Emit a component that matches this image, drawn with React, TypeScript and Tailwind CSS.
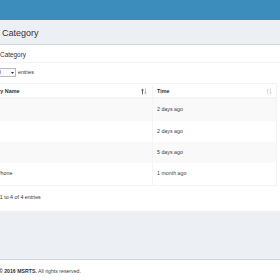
import React from "react";

const ROWS = [
  { name: "Food", time: "2 days ago" },
  { name: "Books", time: "2 days ago" },
  { name: "Laptop", time: "5 days ago" },
  { name: "Mobile Phone", time: "1 month ago" },
];

function SortIcon({ active }: { active?: boolean }) {
  const up = active ? "#666" : "#ddd";
  const down = active ? "#bbb" : "#ddd";
  return (
    <svg width="6" height="7" viewBox="0 0 6 7" className="shrink-0">
      <path d="M1.5 0.5 L0 2.5 H1 V6.5 H2 V2.5 H3 Z" fill={up} />
      <path d="M4.5 6.5 L3 4.5 H4 V0.5 H5 V4.5 H6 Z" fill={down} />
    </svg>
  );
}

export default function App() {
  return (
    <div className="w-[280px] h-[280px] overflow-hidden bg-[#ecf0f5] font-['Liberation_Sans',Arial,sans-serif] text-[#333]">
      {/* top navbar */}
      <div className="h-[20px] bg-[#3c8dbc]" />

      {/* content header */}
      <div className="flex h-[24px] items-center pl-[2px] pt-[3px] text-[9px] leading-none">
        Category
      </div>

      {/* box */}
      <div className="border-t border-[#d2d6de] bg-white">
        <div className="flex h-[18px] items-center border-b border-[#f4f4f4] pt-[3px] text-[6.4px] leading-none">
          <span className="ml-[-11.7px]">List Category</span>
        </div>

        <div className="pt-[5px] pb-[9px]">
          {/* length selector */}
          <div className="flex h-[9px] items-center gap-[2px] text-[5.3px] leading-none">
            <div className="ml-[-12px] flex h-[9px] w-[28px] items-center justify-between border border-[#bbb] bg-[#fafafa] pl-[6px] pr-[1px]">
              <span>10</span>
              <span className="flex h-full items-center pl-[1px]">
                <svg width="3" height="2" viewBox="0 0 3 2">
                  <path d="M0 0 H3 L1.5 2 Z" fill="#333" />
                </svg>
              </span>
            </div>
            <span>entries</span>
          </div>

          {/* table */}
          <div className="mt-[6px] ml-[-60px] w-[337px] border border-[#f4f4f4] text-[5.3px] leading-none">
            <div className="flex h-[15px] border-b-2 border-[#f4f4f4] pt-[2px] text-[5.4px] font-bold">
              <div className="flex w-[212px] items-center justify-between border-r border-[#f4f4f4] pl-[39px] pr-[5px]">
                <span>Category Name</span>
                <SortIcon active />
              </div>
              <div className="flex flex-1 items-center justify-between pl-[4px] pr-[4px]">
                <span>Time</span>
                <SortIcon />
              </div>
            </div>
            {ROWS.map((r, i) => (
              <div
                key={r.time + i}
                className={`flex ${i % 2 === 0 ? "bg-[#f9f9f9]" : "bg-white"} ${i === 0 || i === 3 ? "h-[22px]" : "h-[21px]"}`}
              >
                <div className="flex w-[212px] items-center border-r border-[#f4f4f4] pl-[39px]">
                  {r.name}
                </div>
                <div className="flex flex-1 items-center pl-[4px] text-[#444]">{r.time}</div>
              </div>
            ))}
          </div>

          <div className="mt-[6px] flex h-[10px] items-center pt-[1px] text-[5.3px] leading-none">
            <span className="ml-[-22px]">Showing 1 to 4 of 4 entries</span>
          </div>
        </div>
      </div>

      {/* spacer of content wrapper */}
      <div className="h-[48px]" />

      {/* footer */}
      <div className="flex h-[22px] items-center border-t border-[#d2d6de] bg-white pt-[2px] text-[5.2px] leading-none text-[#444]">
        <span className="ml-[-27px]">
          <strong className="text-[#333]">Copyright © 2016 MSRTS.</strong> All rights reserved.
        </span>
      </div>
    </div>
  );
}
